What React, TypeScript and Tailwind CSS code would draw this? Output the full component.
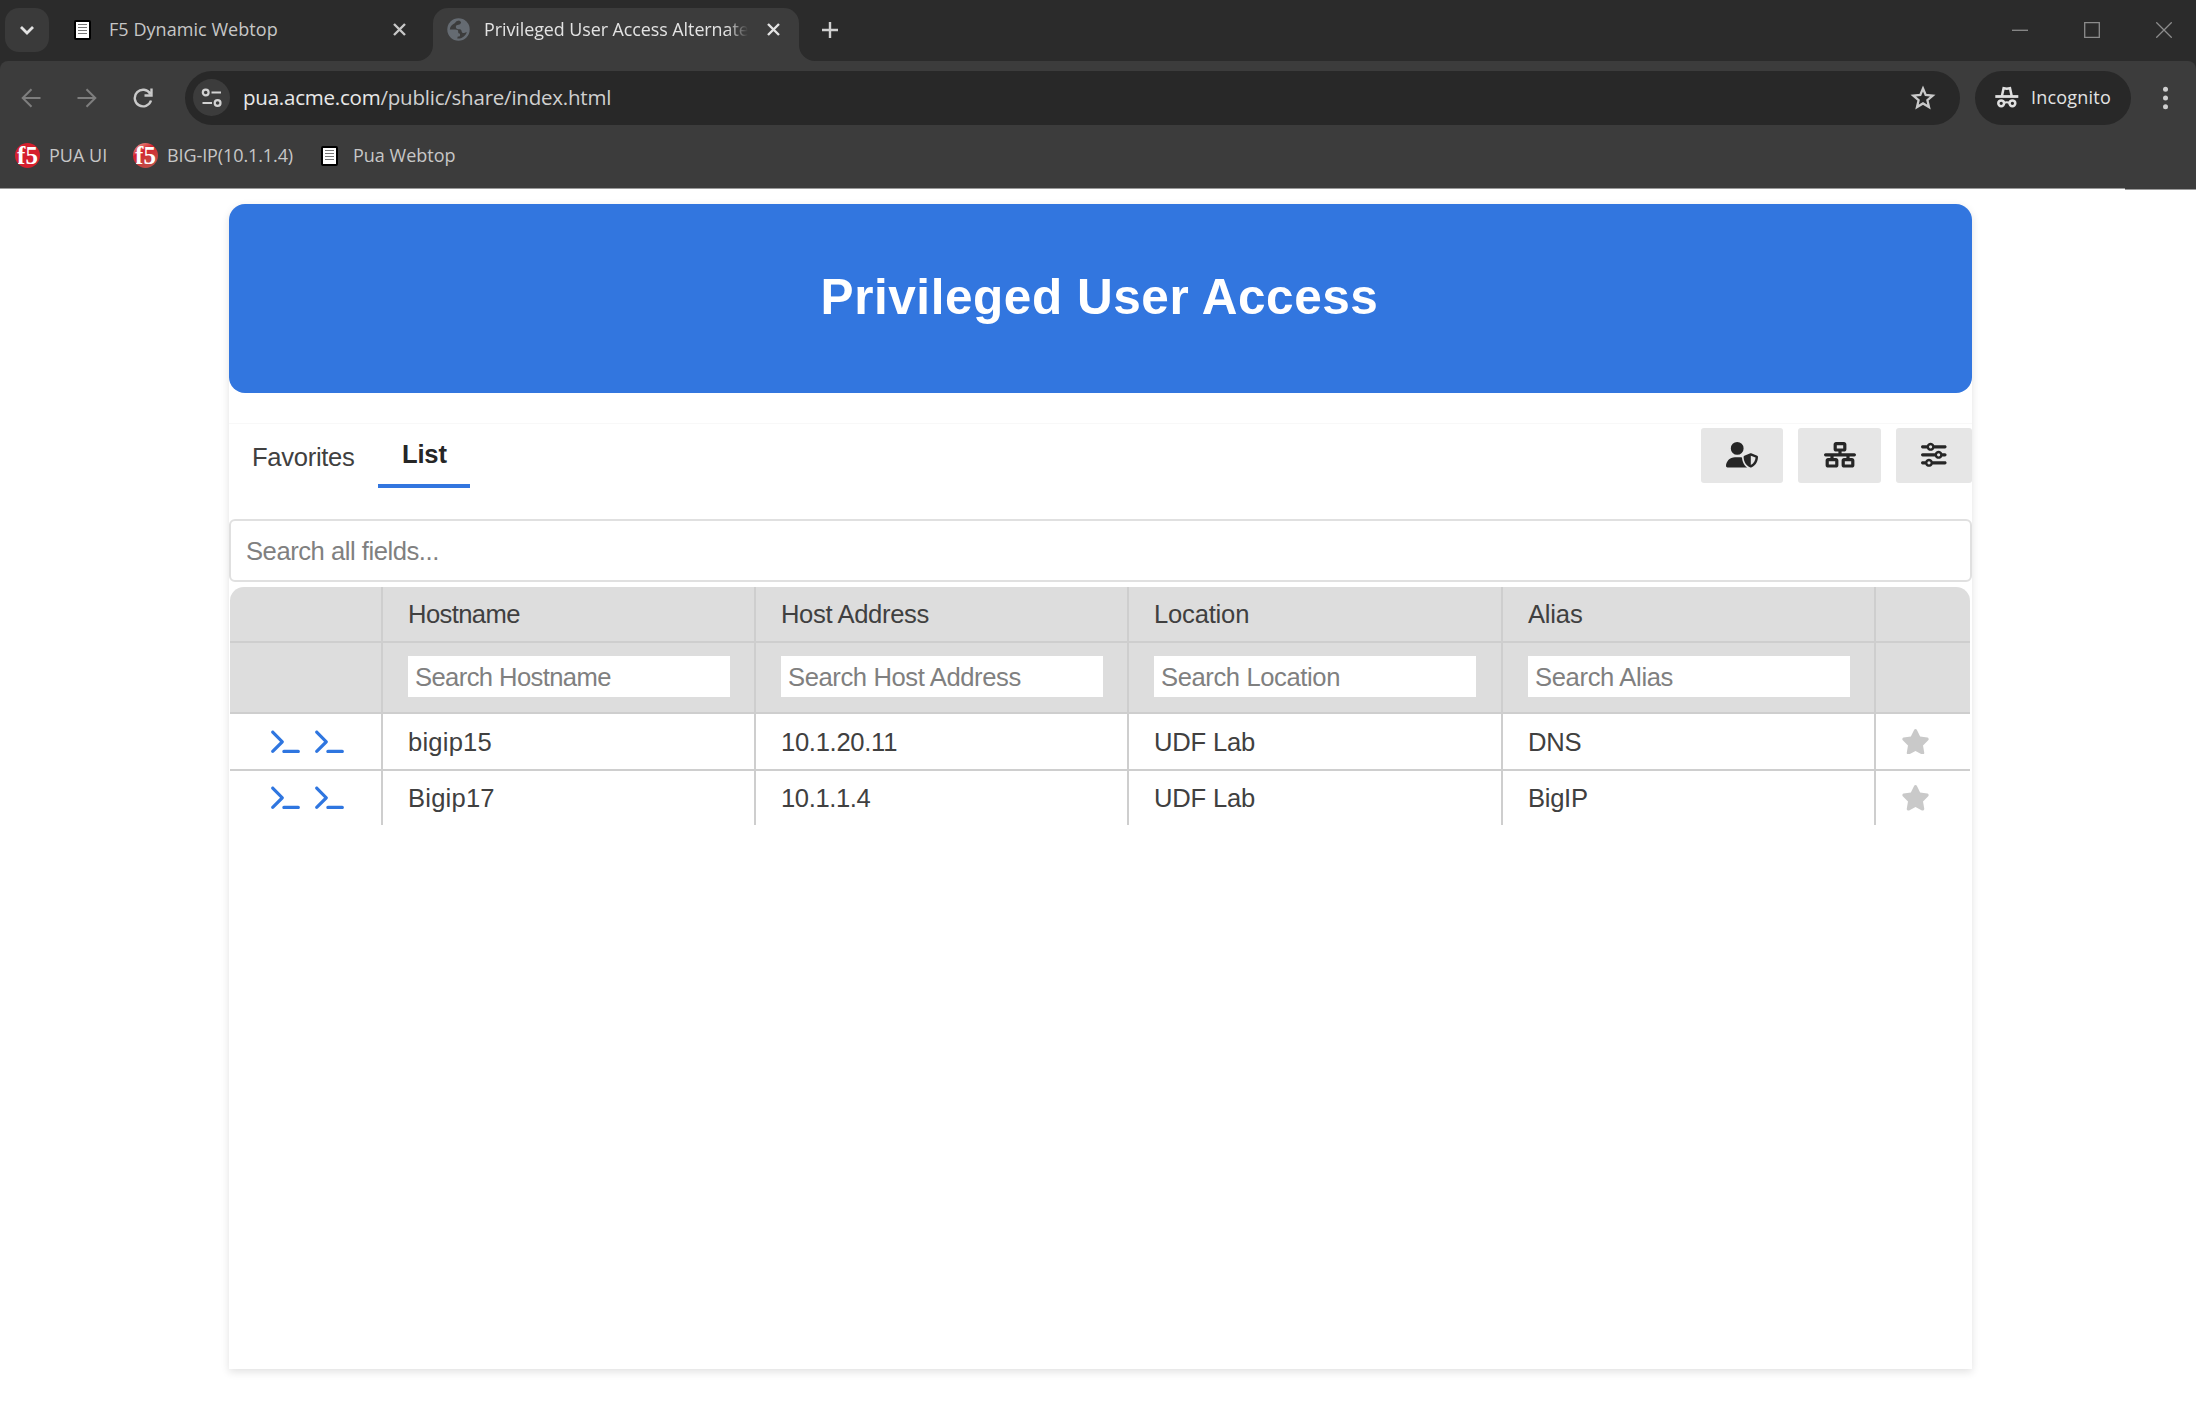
import type { ReactNode } from "react";
import { FaNetworkWired, FaSliders, FaStar, FaTerminal, FaUserShield } from "react-icons/fa6";

const UI_FONT = "font-['Open_Sans','Noto_Sans',sans-serif]";
const PAGE_FONT = "font-['Liberation_Sans',Arial,sans-serif]";

function DocIcon() {
  return (
    <span className="flex h-5 w-[17px] shrink-0 flex-col items-center justify-start gap-[2px] rounded-[2px] border-2 border-black bg-white pt-[2px]">
      <span className="h-px w-[9px] bg-[#777]" />
      <span className="h-px w-[9px] bg-[#777]" />
      <span className="h-px w-[9px] bg-[#777]" />
      <span className="h-px w-[9px] bg-[#777]" />
    </span>
  );
}

function F5Icon({ glossy = false }: { glossy?: boolean }) {
  return (
    <span
      className={`flex size-[25px] shrink-0 items-center justify-center overflow-hidden rounded-full font-['Liberation_Serif',serif] text-[25px] leading-none font-bold tracking-[0px] text-white ${
        glossy ? "bg-linear-150 from-[#e9a3a3] via-[#d5202e] via-35% to-[#b8564f]" : "bg-[#d5202e]"
      }`}
    >
      f5
    </span>
  );
}

function CloseIcon() {
  return (
    <svg className="size-[13px] shrink-0" viewBox="0 0 13 13" fill="none" stroke="currentColor" strokeWidth="2.4">
      <path d="M1 1l11 11M12 1L1 12" />
    </svg>
  );
}

function GlobeIcon() {
  return (
    <svg className="size-[23px] shrink-0" viewBox="0 0 23 23">
      <circle cx="11.5" cy="11.5" r="11.2" fill="#656b72" />
      <path
        d="M2.800 11.500h5.400c2.600 0 3 .8 3 2.600 0 1.200.6 1.600 1.800 1.600v1.700c0 1-1 1.200-2.200 1.200l-.6 1.900c4.200.5 8.400-2.300 9.600-6.600l-2.600 1c-1.500.4-2.400-.3-2.600-1.700-.2-1.300-1-1.900-2.400-1.900-2 0-3.400-.9-3.400-2.400 0-1.700 1.200-2 2.600-2.200 1.600-.2 2.400-1 2.700-2.800l-2-1.400c-1.600.1-2.500.5-3.300 1.500-.8.9-1.400 1.500-2.400 2.100-1.800 1-3.200 2.800-3.600 5.400z"
        fill="#3c3c3c"
      />
    </svg>
  );
}

function Flare({ flip = false }: { flip?: boolean }) {
  return (
    <svg className={flip ? "size-4 shrink-0 -scale-x-100" : "size-4 shrink-0"} viewBox="0 0 16 16">
      <path d="M16 0v16H0A16 16 0 0 0 16 0z" fill="#3c3c3c" />
    </svg>
  );
}

function TabStrip() {
  return (
    <div className="flex h-[61px] items-stretch bg-[#2b2b2b] text-[#c7c7c7]">
      <div className="flex items-center pb-px pl-[5px]">
        <button className="flex size-11 items-center justify-center rounded-[14px] bg-[#3a3a3a]">
          <svg className="h-2.5 w-4" viewBox="0 0 16 10" fill="none" stroke="#e3e3e3" strokeWidth="2.800">
            <path d="M2 2l6 6 6-6" />
          </svg>
        </button>
      </div>
      <div className="ml-[25px] flex w-[332px] items-center pb-[2px]">
        <DocIcon />
        <span className="ml-[18px] flex-1 text-[18px] tracking-[0.05px] whitespace-nowrap">F5 Dynamic Webtop</span>
        <CloseIcon />
      </div>
      <div className="ml-[11px] flex">
        <div className="flex items-end">
          <Flare />
        </div>
        <div className="mt-2 flex w-[366px] items-center rounded-t-[15px] bg-[#3c3c3c] pb-[11px] pl-[14px]">
          <GlobeIcon />
          <span className="ml-[14px] w-[264px] mask-r-from-[92%] mask-r-to-100% text-[17.900px] tracking-[-0.060px] whitespace-nowrap text-[#e3e3e3]">
            Privileged User Access Alternate
          </span>
          <span className="ml-[19px] text-[#e3e3e3]">
            <CloseIcon />
          </span>
        </div>
        <div className="flex items-end">
          <Flare flip />
        </div>
      </div>
      <div className="flex flex-1 items-center pb-[2px] pl-[7px]">
        <svg className="size-4" viewBox="0 0 16 16" fill="none" stroke="#d0d0d0" strokeWidth="2.400">
          <path d="M8 0v16M0 8h16" />
        </svg>
      </div>
      <div className="flex items-center gap-[56px] pr-6 pb-[2px]">
        <svg className="size-4" viewBox="0 0 16 16" fill="none" stroke="#8c8c8c" strokeWidth="1.300">
          <path d="M0 8.300h16" />
        </svg>
        <svg className="size-4" viewBox="0 0 16 16" fill="none" stroke="#8c8c8c" strokeWidth="1.300">
          <path d="M.7.7h14.600v14.600H.7z" />
        </svg>
        <svg className="size-4" viewBox="0 0 16 16" fill="none" stroke="#8c8c8c" strokeWidth="1.300">
          <path d="M.3.3l15.400 15.400M15.700.3L.3 15.700" />
        </svg>
      </div>
    </div>
  );
}

function Toolbar() {
  return (
    <div className="flex h-[73px] items-center rounded-t-[8px] bg-[#3c3c3c]">
      <div className="flex items-center gap-9 pl-[21px] text-[#7e7e7e]">
        <svg className="size-5" viewBox="0 0 20 20" fill="none" stroke="currentColor" strokeWidth="2">
          <path d="M19.500 10H2M10.500 1.200L1.700 10l8.800 8.800" />
        </svg>
        <svg className="size-5" viewBox="0 0 20 20" fill="none" stroke="currentColor" strokeWidth="2">
          <path d="M.5 10H18M9.500 1.200l8.800 8.800-8.800 8.800" />
        </svg>
        <svg className="size-5 text-[#c9c9c9]" viewBox="0 0 20 20" fill="none" stroke="currentColor" strokeWidth="2.400">
          <path d="M17.200 5.800A8.300 8.300 0 1 0 18 12.500M18.500.5v7h-7" />
        </svg>
      </div>
      <div className="ml-[32px] flex h-[54px] w-[1775px] items-center rounded-full bg-[#282828] pr-6 pl-2">
        <span className="flex size-[37px] items-center justify-center rounded-full bg-[#3c3c3c]">
          <svg className="h-5 w-[22px]" viewBox="0 0 22 20" fill="none" stroke="#d2d2d2" strokeWidth="2.200">
            <circle cx="4.700" cy="4.500" r="2.900" />
            <path d="M10.500 4.500h9.500M1.500 15h9.500" />
            <circle cx="16.600" cy="15" r="2.900" />
          </svg>
        </span>
        <span className="ml-[13px] flex-1 text-[20.500px] tracking-[-0.220px] whitespace-nowrap text-[#d0d0d0]">
          <span className="text-[#e8e8e8]">pua.acme.com</span>/public/share/index.html
        </span>
        <svg className="size-[26px]" viewBox="0 0 26 26" fill="none" stroke="#c9c9c9" strokeWidth="2.300">
          <path d="M13 3.500l2.700 6.500 7 .6-5.300 4.600 1.600 6.800-6-3.600-6 3.600 1.600-6.800-5.300-4.600 7-.6z" />
        </svg>
      </div>
      <div className="ml-[15px] flex h-[54px] w-[156px] items-center rounded-full bg-[#282828] pl-5">
        <svg className="size-6" viewBox="0 0 24 24" fill="none" stroke="#e0e0e0" strokeWidth="2.500">
          <path d="M6.800 10.500L8.600 2.200l3.200.6 3.200-.6 1.800 8.300" />
          <path d="M.3 10.500h23" strokeWidth="2.800" />
          <circle cx="6.200" cy="17.300" r="2.900" />
          <circle cx="17.400" cy="17.300" r="2.900" />
          <path d="M9 16.800q2.800-1.300 5.600 0" strokeWidth="2" />
        </svg>
        <span className="ml-[12px] text-[18px] tracking-[0.2px] text-[#e3e3e3]">Incognito</span>
      </div>
      <svg className="ml-[32px] h-6 w-[5px]" viewBox="0 0 5 24" fill="#cfcfcf">
        <circle cx="2.500" cy="3.300" r="2.500" />
        <circle cx="2.500" cy="12" r="2.500" />
        <circle cx="2.500" cy="20.700" r="2.500" />
      </svg>
    </div>
  );
}

function Bookmarks() {
  return (
    <div className="h-[54px] bg-[#3c3c3c] pb-[11px]">
      <div className="flex h-[43px] items-center pl-[15px] text-[18px] whitespace-nowrap text-[#c7c7c7]">
        <div className="flex w-[118px] items-center gap-[9px]">
          <F5Icon />
          <span>PUA UI</span>
        </div>
        <div className="flex w-[188px] items-center gap-[9px]">
          <F5Icon glossy />
          <span className="tracking-[-0.100px]">BIG-IP(10.1.1.4)</span>
        </div>
        <div className="flex items-center gap-[15px]">
          <DocIcon />
          <span>Pua Webtop</span>
        </div>
      </div>
    </div>
  );
}

function ToolButton({ className, children }: { className: string; children: ReactNode }) {
  return (
    <button className={`flex h-[55px] items-center justify-center rounded-[3px] bg-[#e6e6e6] pb-px text-[#262626] ${className}`}>
      {children}
    </button>
  );
}

const GRID = "grid grid-cols-[153px_373px_373px_374px_373px_1fr]";
const LINE = "border-r-2 border-[#cecece]";

const columns = [
  { title: "Hostname", titleTracking: "tracking-[-0.6px]", hint: "Search Hostname", hintTracking: "tracking-[-0.6px]" },
  { title: "Host Address", titleTracking: "tracking-[-0.36px]", hint: "Search Host Address", hintTracking: "tracking-[-0.4px]" },
  { title: "Location", titleTracking: "tracking-[-0.2px]", hint: "Search Location", hintTracking: "tracking-[-0.4px]" },
  { title: "Alias", titleTracking: "tracking-[-0.200px]", hint: "Search Alias", hintTracking: "tracking-[-0.35px]" },
];

const hosts = [
  [
    { text: "bigip15", tracking: "tracking-[0.2px]" },
    { text: "10.1.20.11", tracking: "tracking-[-0.3px]" },
    { text: "UDF Lab", tracking: "tracking-[-0.2px]" },
    { text: "DNS", tracking: "tracking-[-0.2px]" },
  ],
  [
    { text: "Bigip17", tracking: "tracking-[0.2px]" },
    { text: "10.1.1.4", tracking: "tracking-[-0.4px]" },
    { text: "UDF Lab", tracking: "tracking-[-0.2px]" },
    { text: "BigIP", tracking: "tracking-[-0.3px]" },
  ],
];

function HostTable() {
  return (
    <div className="mt-[5px] mr-[2px] ml-px text-[25.600px] leading-[30px] text-[#404040]">
      <div className="overflow-hidden rounded-t-[14px] bg-[#ddd]">
        <div className={`${GRID} h-14 border-b-2 border-[#cecece]`}>
          <div className={LINE} />
          {columns.map((c) => (
            <div key={c.title} className={`${LINE} flex items-center pl-[25px] ${c.titleTracking}`}>
              {c.title}
            </div>
          ))}
          <div />
        </div>
        <div className={`${GRID} h-[71px] border-b-2 border-[#cecece]`}>
          <div className={LINE} />
          {columns.map((c) => (
            <div key={c.title} className={`${LINE} pt-[13px] pl-[25px]`}>
              <div className={`flex h-[41px] w-[322px] items-center bg-white pl-[7px] text-[#808080] ${c.hintTracking}`}>
                {c.hint}
              </div>
            </div>
          ))}
          <div />
        </div>
      </div>
      {hosts.map((row, i) => (
        <div key={i} className={`${GRID} ${i === 0 ? "h-[57px] border-b-2 border-[#cecece]" : "h-[54px]"}`}>
          <div className={`${LINE} flex items-center gap-[15px] pl-[41px] text-[#2f76e0]`}>
            <FaTerminal className="h-[25.600px] w-[29px]" />
            <FaTerminal className="h-[25.600px] w-[29px]" />
          </div>
          {row.map((cell, j) => (
            <div key={j} className={`${LINE} flex items-center pl-[25px] ${cell.tracking}`}>
              {cell.text}
            </div>
          ))}
          <div className="flex items-center pl-[25px] text-[#c9c9c9]">
            <FaStar className="h-[25.600px] w-[29px]" />
          </div>
        </div>
      ))}
    </div>
  );
}

export default function App() {
  return (
    <div className="h-[1422px] w-[2196px] overflow-hidden bg-white">
      <div className={`bg-[#2b2b2b] ${UI_FONT}`}>
        <TabStrip />
        <Toolbar />
        <Bookmarks />
        <div className="flex h-[2px] bg-white">
          <div className="h-px w-[2125px] bg-[#9a9a9a]" />
          <div className="h-[2px] flex-1 border-b border-[#9a9a9a] bg-[#3c3c3c]" />
        </div>
      </div>
      <main className={`mt-[14px] ml-[229px] h-[1165px] w-[1743px] rounded-t-[16px] shadow-[0_3px_8px_rgba(0,0,0,0.12)] ${PAGE_FONT}`}>
        <header className="flex h-[189px] items-center justify-center rounded-[16px] bg-[#3276df] pr-[2px] pb-[3px] text-[49.500px] font-bold tracking-[0.550px] text-white">
          Privileged User Access
        </header>
        <div className="mt-[30px] flex h-[96px] items-start border-t border-[#f8f8f8]">
          <div className="flex flex-1 items-start text-[25.600px] leading-[30px] text-[#404040]">
            <div className="mt-[18px] w-[149px] pl-[23px] tracking-[-0.300px]">Favorites</div>
            <div className="h-[64px] w-[92px] border-b-4 border-[#3276df] pt-[15px] pl-[24px] font-bold tracking-[-0.2px] text-[#262626]">
              List
            </div>
          </div>
          <div className="mt-[4px] flex gap-[15px]">
            <ToolButton className="w-[82px]">
              <FaUserShield className="h-[25.600px] w-[32px]" />
            </ToolButton>
            <ToolButton className="w-[83px]">
              <FaNetworkWired className="h-[25.600px] w-[32px]" />
            </ToolButton>
            <ToolButton className="w-[76px]">
              <FaSliders className="size-[25.600px]" />
            </ToolButton>
          </div>
        </div>
        <div className="flex h-[63px] items-center rounded-[6px] border-2 border-[#e0e0e0] bg-white pt-px pl-[15px] text-[25.600px] tracking-[-0.460px] text-[#808080]">
          Search all fields...
        </div>
        <HostTable />
      </main>
    </div>
  );
}
